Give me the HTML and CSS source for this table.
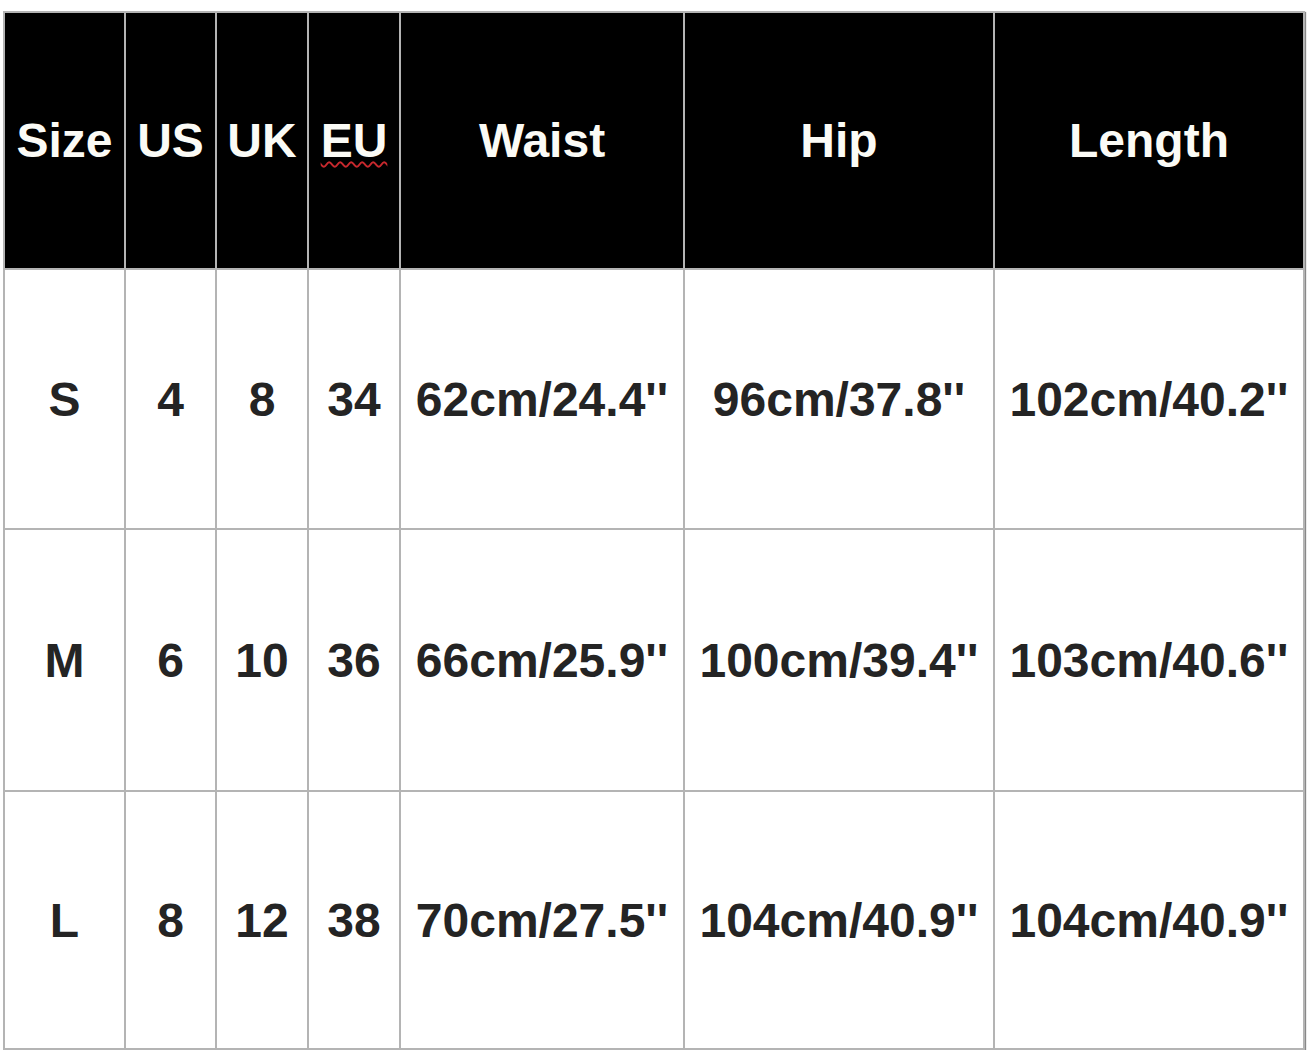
FILE: index.html
```html
<!DOCTYPE html>
<html>
<head>
<meta charset="utf-8">
<link rel="stylesheet" href="styles.css">
</head>
<body>
<div class="chart">
  <div class="cell head">Size</div>
  <div class="cell head">US</div>
  <div class="cell head">UK</div>
  <div class="cell head"><span class="spell">EU</span></div>
  <div class="cell head">Waist</div>
  <div class="cell head">Hip</div>
  <div class="cell head">Length</div>

  <div class="cell">S</div>
  <div class="cell">4</div>
  <div class="cell">8</div>
  <div class="cell">34</div>
  <div class="cell">62cm/24.4''</div>
  <div class="cell">96cm/37.8''</div>
  <div class="cell">102cm/40.2''</div>

  <div class="cell">M</div>
  <div class="cell">6</div>
  <div class="cell">10</div>
  <div class="cell">36</div>
  <div class="cell">66cm/25.9''</div>
  <div class="cell">100cm/39.4''</div>
  <div class="cell">103cm/40.6''</div>

  <div class="cell">L</div>
  <div class="cell">8</div>
  <div class="cell">12</div>
  <div class="cell">38</div>
  <div class="cell">70cm/27.5''</div>
  <div class="cell">104cm/40.9''</div>
  <div class="cell">104cm/40.9''</div>
</div>
</body>
</html>
```
FILE: styles.css
```css
html, body {
  margin: 0;
  padding: 0;
  background: #ffffff;
}

body {
  padding: 11px 0 0 3px;
}

.chart {
  display: grid;
  grid-template-columns: 119px 89px 90px 90px 282px 308px 308px;
  grid-template-rows: 255px 258px 260px 256px;
  gap: 2px;
  padding: 2px;
  background: #b4b4b4;
  width: max-content;
  font-family: "Liberation Sans", Arial, sans-serif;
  font-weight: bold;
  font-size: 48px;
  box-shadow: 1px 1px 1px #888;
}

.cell {
  background: #ffffff;
  color: #242424;
  display: flex;
  align-items: center;
  justify-content: center;
  white-space: nowrap;
}

.head {
  background: #000000;
  color: #fbfbf6;
}

.spell {
  text-decoration: underline wavy #c8282d;
  text-decoration-thickness: 2px;
  text-underline-offset: 4px;
}
```
